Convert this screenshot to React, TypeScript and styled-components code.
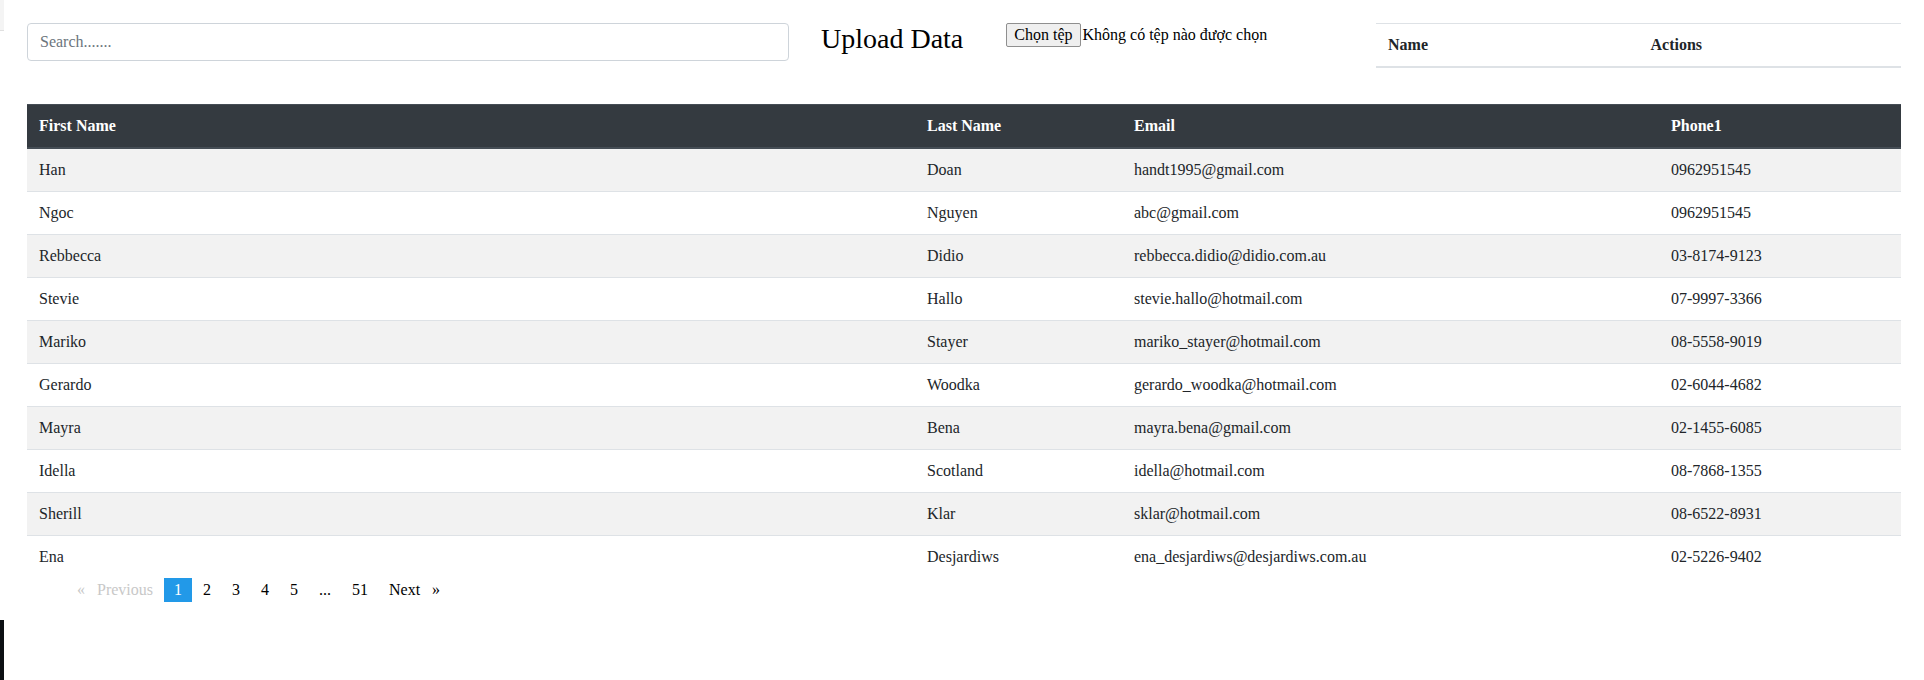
import React from 'react';
import styled, { createGlobalStyle } from 'styled-components';

const GlobalStyle = createGlobalStyle`
    body {
        margin: 0;
        background: #fff;
        color: #212529;
        font-family: "Liberation Serif", "Times New Roman", serif;
        font-size: 16px;
    }
`;

interface IContact {
    firstName: string;
    lastName: string;
    email: string;
    phone1: string;
}

const contacts: IContact[] = [
    { firstName: "Han", lastName: "Doan", email: "handt1995@gmail.com", phone1: "0962951545" },
    { firstName: "Ngoc", lastName: "Nguyen", email: "abc@gmail.com", phone1: "0962951545" },
    { firstName: "Rebbecca", lastName: "Didio", email: "rebbecca.didio@didio.com.au", phone1: "03-8174-9123" },
    { firstName: "Stevie", lastName: "Hallo", email: "stevie.hallo@hotmail.com", phone1: "07-9997-3366" },
    { firstName: "Mariko", lastName: "Stayer", email: "mariko_stayer@hotmail.com", phone1: "08-5558-9019" },
    { firstName: "Gerardo", lastName: "Woodka", email: "gerardo_woodka@hotmail.com", phone1: "02-6044-4682" },
    { firstName: "Mayra", lastName: "Bena", email: "mayra.bena@gmail.com", phone1: "02-1455-6085" },
    { firstName: "Idella", lastName: "Scotland", email: "idella@hotmail.com", phone1: "08-7868-1355" },
    { firstName: "Sherill", lastName: "Klar", email: "sklar@hotmail.com", phone1: "08-6522-8931" },
    { firstName: "Ena", lastName: "Desjardiws", email: "ena_desjardiws@desjardiws.com.au", phone1: "02-5226-9402" },
];

const Page = styled.div`
    padding: 23px 23px 0 27px;
`;

const TopRow = styled.div`
    display: flex;
    align-items: flex-start;
`;

const SearchInput = styled.input`
    box-sizing: border-box;
    width: 762px;
    height: 38px;
    padding: 6px 12px;
    border: 1px solid #ced4da;
    border-radius: 4px;
    font-family: inherit;
    font-size: 16px;
    color: #495057;
    outline: none;
    &::placeholder {
        color: #6c757d;
    }
`;

const UploadTitle = styled.h3`
    margin: 0 0 0 32px;
    font-size: 28px;
    font-weight: 400;
    line-height: normal;
    color: #000;
`;

const FilePicker = styled.div`
    display: flex;
    align-items: center;
    margin-left: 43px;
    font-size: 16px;
    color: #000;
`;

const FileButton = styled.button`
    box-sizing: border-box;
    height: 24px;
    padding: 0 7px;
    margin-right: 2px;
    font-family: inherit;
    font-size: 16px;
    color: #000;
    background: #efefef;
    border: 1px solid #8f8f8f;
    border-radius: 2px;
`;

const SideTable = styled.table`
    margin-left: auto;
    width: 525px;
    border-collapse: collapse;
`;

const SideTh = styled.th`
    width: 50%;
    text-align: left;
    padding: 12px;
    line-height: 18px;
    font-weight: 700;
    border-top: 1px solid #dee2e6;
    border-bottom: 2px solid #dee2e6;
`;

const DataTable = styled.table`
    width: 100%;
    margin-top: 36px;
    border-collapse: collapse;
    table-layout: fixed;
`;

const Col = styled.col<{ $w: number }>`
    width: ${p => p.$w}px;
`;

const HeadCell = styled.th`
    text-align: left;
    padding: 12px;
    line-height: 18px;
    font-weight: 700;
    color: #fff;
    background: #343a40;
    border-top: 1px solid #454d55;
    border-bottom: 2px solid #454d55;
`;

const BodyRow = styled.tr<{ $striped: boolean }>`
    background: ${p => (p.$striped ? '#f2f2f2' : '#fff')};
`;

const Cell = styled.td`
    padding: 12px;
    line-height: 18px;
    border-top: 1px solid #dee2e6;
    white-space: nowrap;
`;

const Pager = styled.ul`
    display: flex;
    gap: 1px;
    margin: 0;
    padding-left: 40px;
    list-style: none;
`;

const PageItem = styled.li<{ $active?: boolean; $disabled?: boolean }>`
    padding: 3px 10px;
    line-height: 18px;
    color: ${p => (p.$active ? '#fff' : p.$disabled ? '#c8c8c8' : '#000')};
    background: ${p => (p.$active ? '#2299e8' : 'transparent')};
    cursor: ${p => (p.$disabled ? 'default' : 'pointer')};
`;

const Arrow = styled.span<{ $side: 'left' | 'right' }>`
    ${p => (p.$side === 'left' ? 'margin-right: 12px;' : 'margin-left: 12px;')}
`;

// slivers of other windows at the left edge of the screenshot
const EdgeTab = styled.div`
    position: fixed;
    left: 0;
    top: 0;
    width: 4px;
    height: 30px;
    background: #f4f4f4;
    border-bottom: 1px solid #e0e0e0;
`;

const EdgeBar = styled.div`
    position: fixed;
    left: 0;
    top: 620px;
    width: 4px;
    height: 60px;
    background: #0c1013;
`;

export default function App() {
    const pages = ['1', '2', '3', '4', '5', '...', '51'];

    return (
        <Page>
            <GlobalStyle />
            <EdgeTab />
            <EdgeBar />
            <TopRow>
                <SearchInput type="text" placeholder="Search......." />
                <UploadTitle>Upload Data</UploadTitle>
                <FilePicker>
                    <FileButton type="button">Chọn tệp</FileButton>
                    <span>Không có tệp nào được chọn</span>
                </FilePicker>
                <SideTable>
                    <thead>
                        <tr>
                            <SideTh>Name</SideTh>
                            <SideTh>Actions</SideTh>
                        </tr>
                    </thead>
                </SideTable>
            </TopRow>

            <DataTable>
                <colgroup>
                    <Col $w={888} />
                    <Col $w={207} />
                    <Col $w={537} />
                    <Col $w={242} />
                </colgroup>
                <thead>
                    <tr>
                        <HeadCell>First Name</HeadCell>
                        <HeadCell>Last Name</HeadCell>
                        <HeadCell>Email</HeadCell>
                        <HeadCell>Phone1</HeadCell>
                    </tr>
                </thead>
                <tbody>
                    {contacts.map((c, i) => (
                        <BodyRow key={c.email} $striped={i % 2 === 0}>
                            <Cell>{c.firstName}</Cell>
                            <Cell>{c.lastName}</Cell>
                            <Cell>{c.email}</Cell>
                            <Cell>{c.phone1}</Cell>
                        </BodyRow>
                    ))}
                </tbody>
            </DataTable>

            <Pager>
                <PageItem $disabled>
                    <Arrow $side="left">«</Arrow>Previous
                </PageItem>
                {pages.map(p => (
                    <PageItem key={p} $active={p === '1'}>{p}</PageItem>
                ))}
                <PageItem>
                    Next<Arrow $side="right">»</Arrow>
                </PageItem>
            </Pager>
        </Page>
    );
}
